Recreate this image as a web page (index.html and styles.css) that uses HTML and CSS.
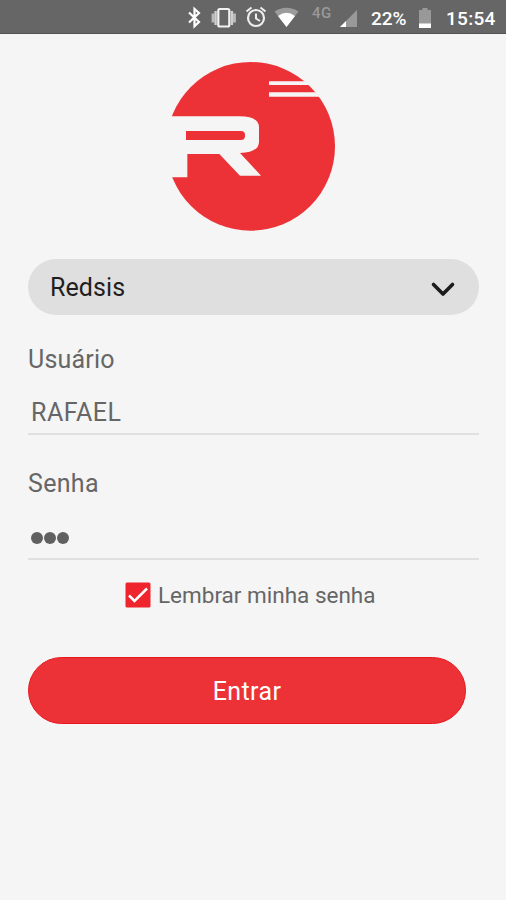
FILE: index.html
```html
<!DOCTYPE html>
<html lang="pt-BR">
<head>
<meta charset="utf-8">
<title>Redsis</title>
<link rel="stylesheet" href="styles.css">
</head>
<body>
<header class="status">
  <svg class="status-icons" width="184" height="33" viewBox="0 0 184 33" aria-hidden="true">
    <path d="M9 12.500l10 9.500-4.500 4.200V9l4.500 4-10 9.500" fill="none" stroke="#fff" stroke-width="2.200"/>
    <path d="M33 13.500v9M54.500 13.500v9" stroke="#bbb" stroke-width="2.800"/>
    <path d="M35.600 11v14M51.900 11v14" stroke="#cfcfcf" stroke-width="2.400"/>
    <rect x="38.300" y="9" width="11" height="17.500" rx="1.500" fill="#666" stroke="#f2f2f2" stroke-width="2.200"/>
    <circle cx="76" cy="18" r="8" fill="none" stroke="#eee" stroke-width="2.200"/>
    <path d="M76 13.500v5l4 2.500M66.500 11.500l5-4M85.500 11.500l-5-4" fill="none" stroke="#eee" stroke-width="2"/>
    <path d="M94.500 11.500Q106.500 4 118.500 11.500L106.500 27z" fill="#9b9b9b"/>
    <path d="M98 16Q106.500 9.500 115 16L106.500 27z" fill="#fff"/>
    <path d="M177 10v17h-17z" fill="#999"/>
    <path d="M166 21v6h-6z" fill="#fff"/>
  </svg>
  <span class="network">4G</span>
  <span class="percent">22%</span>
  <svg class="battery" width="14" height="22" viewBox="0 0 14 22" aria-hidden="true">
    <path d="M1 3h3.500V1h5v2H13v18H1z" fill="#999"/>
    <path d="M1 16.500h12V21H1z" fill="#fff"/>
  </svg>
  <span class="clock">15:54</span>
</header>
<main class="login">
  <svg class="logo" viewBox="18 18 510 510" role="img" aria-label="Redsis">
    <circle cx="272" cy="274" r="253" fill="#ed3237"/>
    <path fill="#f5f5f5" fill-rule="evenodd" d="M0 184H238Q297 184 297 217V260Q297 292 240 294L303 362H240L178 297H82V367H0ZM78 228V255H243Q255 255 255 243V240Q255 228 243 228Z"/>
    <path fill="#f5f5f5" d="M327 79H500V90H327ZM327 112H520V125H327Z"/>
  </svg>
  <div class="select">
    <span class="company">Redsis</span>
    <svg class="chevron" width="26" height="18" viewBox="0 0 26 18" aria-hidden="true"><path d="M3.500 4.500L13 14L22.500 4.500" fill="none" stroke="#1c1c1e" stroke-width="3.600" stroke-linecap="round" stroke-linejoin="round"/></svg>
  </div>
  <div class="label user-label"><span class="user-text">Usuário</span></div>
  <div class="field"><span class="user-value">RAFAEL</span></div>
  <div class="label pass-label"><span class="pass-text">Senha</span></div>
  <div class="field password"><i class="dot"></i><i class="dot"></i><i class="dot"></i></div>
  <div class="remember">
    <svg width="26" height="26" viewBox="0 0 26 26" aria-hidden="true"><rect x=".5" y=".5" width="25" height="25" rx="1.500" fill="#ee252c"/><path d="M4 13.500l5.500 5.500L22 6.500" fill="none" stroke="#fff" stroke-width="2.500"/></svg>
    <span class="remember-text">Lembrar minha senha</span>
  </div>
  <button class="enter"><span class="enter-text">Entrar</span></button>
</main>
</body>
</html>
```
FILE: styles.css
```css
* { box-sizing: border-box; }
body {
  margin: 0;
  height: 900px;
  background: #f5f5f5;
  font-family: Roboto, "Liberation Sans", sans-serif;
  color: #666;
}
span { white-space: nowrap; }
.status {
  display: flex;
  align-items: flex-start;
  height: 34px;
  padding-left: 180px;
  background: #666;
  border-bottom: 1px solid #545454;
  color: #fff;
  overflow: hidden;
}
.status-icons { flex: none; }
.network {
  width: 22px;
  margin-left: -52px;
  margin-top: 3px;
  font-size: 15px;
  line-height: 20px;
  font-weight: 500;
  letter-spacing: 0.5px;
  color: #999;
}
.percent {
  width: 37px;
  margin-left: 37px;
  font-size: 19px;
  line-height: 37px;
  font-weight: 500;
}
.battery { flex: none; margin: 7px 0 0 10px; }
.clock {
  margin-left: 14px;
  font-size: 19px;
  line-height: 37px;
  font-weight: 500;
  letter-spacing: 0.3px;
}
.login {
  display: flex;
  flex-direction: column;
  padding: 27px 27px 0 28px;
}
.logo { width: 170px; height: 170px; margin-left: 138px; }
.select {
  display: flex;
  align-items: center;
  justify-content: space-between;
  height: 56px;
  margin-top: 28px;
  padding: 0 23px 0 22px;
  border-radius: 28px;
  background: #dfdfdf;
  color: #1f1f21;
}
.company { font-size: 25px; letter-spacing: 0.1px; }
.chevron { margin-top: 3px; }
.label { font-size: 25px; line-height: 30px; }
.user-label { margin-top: 30px; }
.user-text { letter-spacing: 0.2px; }
.field {
  height: 60px;
  border-bottom: 2px solid #e0e0e0;
  padding: 23px 0 0 3px;
  font-size: 25px;
  line-height: 30px;
}
.user-value { letter-spacing: 0.5px; }
.pass-label { margin-top: 34px; }
.pass-text { letter-spacing: 0.3px; }
.password {
  display: flex;
  gap: 1px;
  height: 61px;
  padding-top: 33px;
}
.dot { width: 12px; height: 12px; border-radius: 50%; background: #606060; }
.remember {
  display: flex;
  align-items: center;
  gap: 7px;
  height: 30px;
  margin: 20px 0 0 97px;
  font-size: 22.5px;
}
.enter {
  width: 438px;
  height: 67px;
  margin-top: 47px;
  padding: 1px 0 0;
  border: 1px solid #e8171d;
  border-radius: 34px;
  background: #ed3237;
  color: #fff;
  font: 400 25px Roboto, "Liberation Sans", sans-serif;
}
.enter-text { letter-spacing: 0.4px; }
```
